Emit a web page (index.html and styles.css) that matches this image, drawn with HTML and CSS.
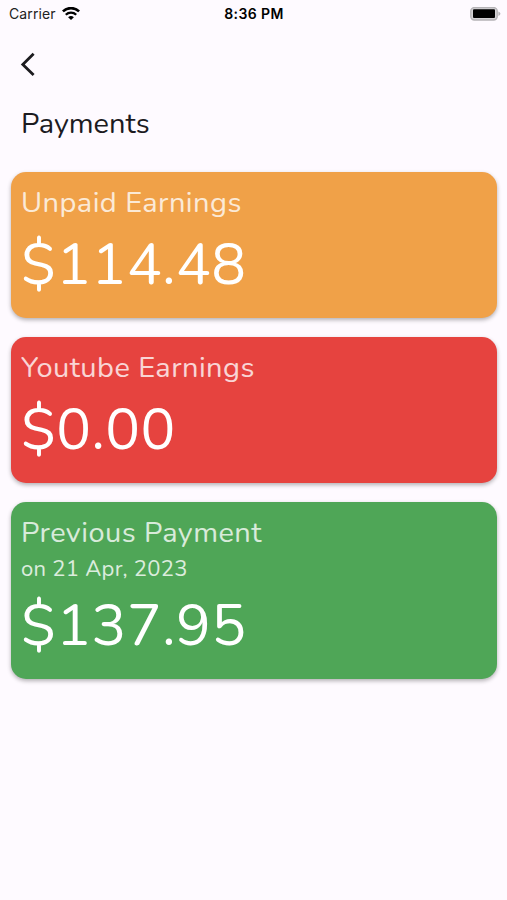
FILE: index.html
```
<!DOCTYPE html>
<html lang="en">
<head>
  <meta charset="UTF-8">
  <meta name="viewport" content="width=device-width, initial-scale=1.0">
  <title>Payments</title>
  <link rel="stylesheet" href="styles.css">
</head>

<body>
  <!-- Status Bar -->
  <div class="status-bar">
    <div class="carrier">
      <span>Carrier</span>
      <svg class="wifi" viewBox="0 0 18 14" width="18" height="14">
        <path d="M.9 4.4a11.6 11.6 0 0 1 16.2 0" fill="none" stroke="#000" stroke-width="2.6"/>
        <path d="M3.8 7.7a7.4 7.4 0 0 1 10.4 0" fill="none" stroke="#000" stroke-width="2.3"/>
        <path d="M9 13.1L6.1 10.2a4.3 4.3 0 0 1 5.8 0z" fill="#000"/>
      </svg>
    </div>
    <span class="time">8:36 PM</span>
    <svg class="battery" viewBox="0 0 31 14" width="31" height="14">
      <rect x="0.8" y="0.6" width="26.4" height="12.4" rx="3.5" fill="#d4d2d5" stroke="#b5b3b6" stroke-width="1.4"/>
      <rect x="3" y="2.2" width="22" height="8.9" rx="1" fill="#000"/>
      <path d="M28.4 4.6q2 .8 2 2.2t-2 2.2z" fill="#b5b3b6"/>
    </svg>
  </div>

  <!-- Header -->
  <header class="header">
    <svg class="back" viewBox="0 0 16 26" width="16" height="26">
      <path d="M13.6 1.8L2.8 12.5l10.8 10.6" fill="none" stroke="#1c1b1f" stroke-width="2.8"/>
    </svg>
    <h1>Payments</h1>
  </header>

  <!-- Payment Cards -->
  <main class="cards">
    <div class="card unpaid">
      <div class="label">Unpaid Earnings</div>
      <div class="amount">$114.48</div>
    </div>
    <div class="card youtube">
      <div class="label">Youtube Earnings</div>
      <div class="amount">$0.00</div>
    </div>
    <div class="card previous">
      <div class="label">Previous Payment</div>
      <div class="date">on 21 Apr, 2023</div>
      <div class="amount">$137.95</div>
    </div>
  </main>
</body>
</html>
```
FILE: styles.css
```
* {
  box-sizing: border-box;
}

body {
  margin: 0;
  min-height: 100vh;
  background: #fefaff;
  color: #1c1b1f;
  font-family: Nunito, "Open Sans", sans-serif;
}

/* Status Bar */
.status-bar {
  display: grid;
  grid-template-columns: 1fr auto 1fr;
  align-items: center;
  height: 27px;
  padding: 0 6px 0 9px;
  font-family: Inter, sans-serif;
  color: #000;
}

.carrier {
  display: flex;
  align-items: center;
  gap: 6px;
  font-size: 14px;
  letter-spacing: 0.1px;
  color: #222;
}

.time {
  font-size: 14px;
  font-weight: 600;
  letter-spacing: 0.4px;
  margin-right: 2px;
}

.battery {
  justify-self: end;
}

/* Header */
.header {
  height: 145px;
  padding: 25px 20px 0;
}

.back {
  display: block;
}

h1 {
  margin: 26px 0 0 1px;
  font-size: 29px;
  font-weight: 400;
  line-height: 40px;
}

/* Cards */
.cards {
  display: flex;
  flex-direction: column;
  gap: 19px;
  padding: 0 10px 0 11px;
}

.card {
  height: 146px;
  padding: 10px;
  border-radius: 15px;
  color: #fff;
  box-shadow: 0 2px 4px rgba(0, 0, 0, 0.3);
}

.unpaid {
  background: #f0a148;
}

.youtube {
  background: #e6433f;
}

.previous {
  height: 177px;
  background: #4fa657;
}

.label {
  font-size: 29px;
  line-height: 42px;
  letter-spacing: 0.45px;
  opacity: 0.78;
}

.date {
  font-size: 22px;
  line-height: 31px;
  letter-spacing: 0.3px;
  opacity: 0.8;
}

.amount {
  font-size: 58px;
  line-height: 81px;
  letter-spacing: 0.5px;
}
```
